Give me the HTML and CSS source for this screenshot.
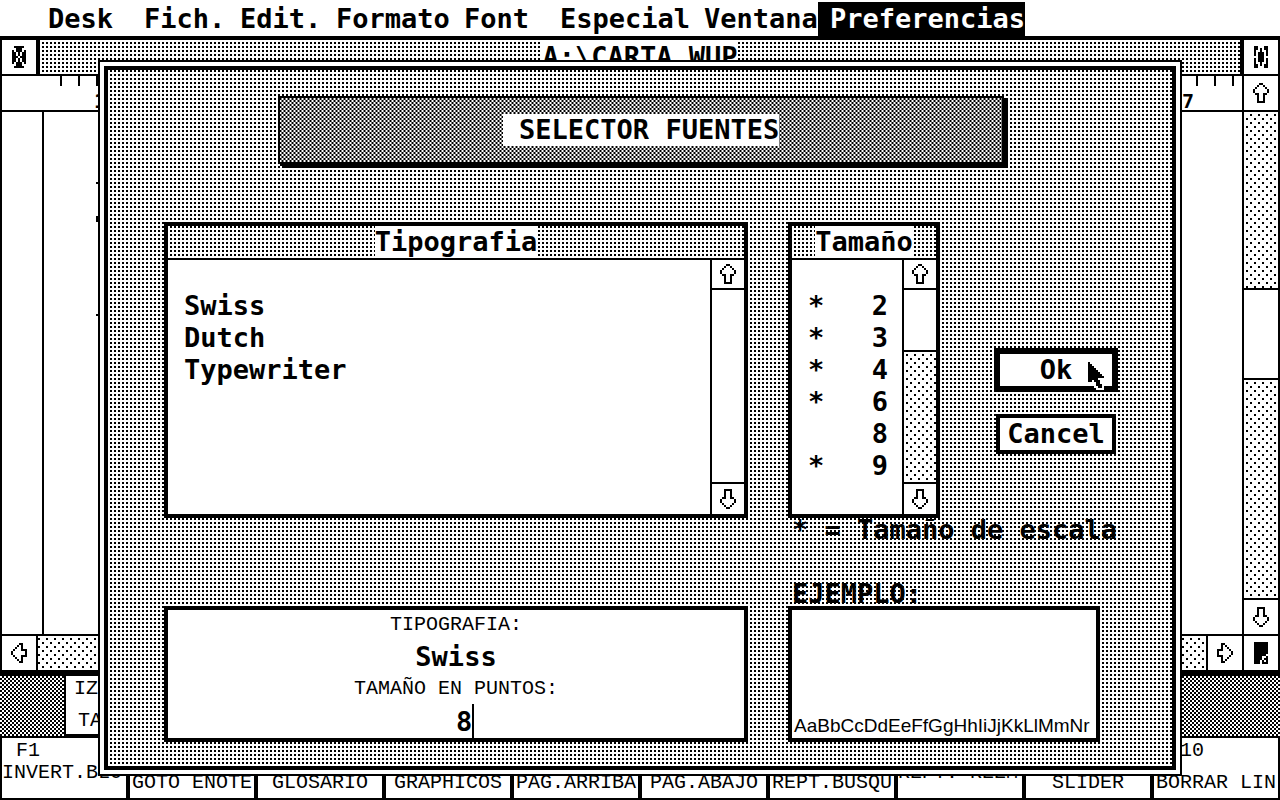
FILE: index.html
```html
<!DOCTYPE html>
<html lang="es">
<head>
<meta charset="utf-8">
<meta name="viewport" content="width=device-width, initial-scale=1">
<title>Selector fuentes</title>
<link rel="stylesheet" href="styles.css">
</head>
<body>
<svg class="sprite" aria-hidden="true">
  <symbol id="arrow-up" viewBox="0 0 8 10"><path d="M3 .5h2M2 1.5h1m2 0h1M1 2.5h1m4 0h1M0 3.5h1m6 0h1M0 4.5h1m6 0h1M1 5.5h2m2 0h2M2 6.5h1m2 0h1M2 7.5h1m2 0h1M2 8.5h1m2 0h1M2 9.5h4"/></symbol>
  <symbol id="arrow-down" viewBox="0 0 8 10"><path d="M2 .5h4M2 1.5h1m2 0h1M2 2.5h1m2 0h1M2 3.5h1m2 0h1M1 4.5h2m2 0h2M0 5.5h1m6 0h1M0 6.5h1m6 0h1M1 7.5h1m4 0h1M2 8.5h1m2 0h1M3 9.5h2"/></symbol>
  <symbol id="arrow-left" viewBox="0 0 8 10"><path d="M4 .5h2M3 1.5h1m1 0h1M2 2.5h1m2 0h1M1 3.5h1m3 0h3M0 4.5h1m6 0h1M0 5.5h1m6 0h1M1 6.5h1m3 0h3M2 7.5h1m2 0h1M3 8.5h1m1 0h1M4 9.5h2"/></symbol>
  <symbol id="arrow-right" viewBox="0 0 8 10"><path d="M2 .5h2M2 1.5h1m1 0h1M2 2.5h1m2 0h1M0 3.5h3m3 0h1M0 4.5h1m6 0h1M0 5.5h1m6 0h1M0 6.5h3m3 0h1M2 7.5h1m2 0h1M2 8.5h1m1 0h1M2 9.5h2"/></symbol>
  <symbol id="close" viewBox="0 0 7 11"><path d="M1 .5h5M2 1.5h3M0 2.5h1m1 0h3m1 0h1M0 3.5h2m1 0h1m1 0h2M0 4.5h2m1 0h1m1 0h2M0 5.5h3m1 0h3M0 6.5h2m1 0h1m1 0h2M0 7.5h2m1 0h1m1 0h2M0 8.5h1m1 0h3m1 0h1M2 9.5h3M1 10.5h5"/></symbol>
  <symbol id="full" viewBox="0 0 7 11"><path d="M0 .5h2m3 0h2M0 1.5h2m1 0h1m1 0h2M0 2.5h1m2 0h1m2 0h1M0 3.5h1m1 0h3m1 0h1M0 4.5h1m1 0h3m1 0h1M2 5.5h3M0 6.5h1m1 0h3m1 0h1M0 7.5h1m1 0h3m1 0h1M0 8.5h1m2 0h1m2 0h1M0 9.5h2m1 0h1m1 0h2M0 10.5h2m3 0h2"/></symbol>
  <symbol id="size" viewBox="0 0 7 11"><path d="M0 3h7" stroke-width="6"/><path d="M0 6.5h6M0 7.5h4m2 0h1M0 8.5h4m1 0h2M0 9.5h3m1 0h1m1 0h1M0 10.5h3m1 0h3"/></symbol>
</svg>

<nav class="menubar" aria-label="Menu">
  <button type="button" class="menu-4">Desk</button>
  <button type="button" class="menu-4">Fich.</button>
  <button type="button" class="menu-4">Edit.</button>
  <button type="button" class="menu-6">Formato</button>
  <button type="button" class="menu-4">Font</button>
  <button type="button" class="menu-7">Especial</button>
  <button type="button" class="menu-5">Ventana</button>
  <button type="button" class="open">Preferencias</button>
</nav>

<main class="window">
  <header class="titlebar">
    <button type="button" class="cell" aria-label="Cerrar"><svg class="gadget"><use href="#close"/></svg></button>
    <div class="title-fill"><span>A:\CARTA.WUP</span></div>
    <button type="button" class="cell" aria-label="Ampliar"><svg class="gadget"><use href="#full"/></svg></button>
  </header>
  <div class="work">
    <div class="sheet">
      <div class="ruler">
        <div class="ticks"><i></i><i></i><i></i></div>
        <span class="mark first">1</span>
        <span class="mark last">7</span>
        <div class="ticks"><i></i><i></i><i></i></div>
      </div>
      <div class="page"><div class="margin"></div><div class="dots"><i></i><i></i><i></i></div></div>
      <div class="hscroll">
        <button type="button" class="cell" aria-label="Izquierda"><svg class="arrow"><use href="#arrow-left"/></svg></button>
        <div class="track"></div>
        <button type="button" class="cell" aria-label="Derecha"><svg class="arrow"><use href="#arrow-right"/></svg></button>
      </div>
    </div>
    <div class="vscroll">
      <button type="button" class="cell" aria-label="Arriba"><svg class="arrow"><use href="#arrow-up"/></svg></button>
      <div class="track before"></div>
      <div class="thumb"></div>
      <div class="track after"></div>
      <button type="button" class="cell" aria-label="Abajo"><svg class="arrow"><use href="#arrow-down"/></svg></button>
      <button type="button" class="cell" aria-label="Redimensionar"><svg class="gadget"><use href="#size"/></svg></button>
    </div>
  </div>
</main>

<div class="desk">
  <div class="tabs"><span>IZQ</span><span class="second">TAB</span></div>
</div>

<div class="keys">
  <button type="button" class="raised"><b>F1</b><span>INVERT.BLO</span></button>
  <button type="button"><b>F2</b><span>GOTO ENOTE</span></button>
  <button type="button"><b>F3</b><span>GLOSARIO</span></button>
  <button type="button"><b>F4</b><span>GRAPHICOS</span></button>
  <button type="button"><b>F5</b><span>PAG.ARRIBA</span></button>
  <button type="button"><b>F6</b><span>PAG.ABAJO</span></button>
  <button type="button"><b>F7</b><span>REPT.BUSQU</span></button>
  <button type="button" class="raised"><b>F8</b><span>REPT. REEM</span></button>
  <button type="button"><b>F9</b><span>SLIDER</span></button>
  <button type="button"><b>F10</b><span>BORRAR LIN</span></button>
</div>

<div class="frame" role="dialog" aria-labelledby="dialog-title">
  <form class="dialog">
    <h1 class="banner"><span id="dialog-title"> SELECTOR FUENTES</span></h1>

    <section class="listbox">
      <h2><span>Tipografia</span></h2>
      <div class="list-row">
        <ul class="fonts"><li>Swiss</li><li>Dutch</li><li>Typewriter</li></ul>
        <div class="bar">
          <button type="button" aria-label="Subir tipografia"><svg class="arrow"><use href="#arrow-up"/></svg></button>
          <div class="plain"></div>
          <button type="button" aria-label="Bajar tipografia"><svg class="arrow"><use href="#arrow-down"/></svg></button>
        </div>
      </div>
    </section>

    <div class="side">
      <section class="listbox narrow">
        <h2><span>Tamaño</span></h2>
        <div class="list-row">
          <ul class="sizes">
            <li><span>*</span><span>2</span></li>
            <li><span>*</span><span>3</span></li>
            <li><span>*</span><span>4</span></li>
            <li><span>*</span><span>6</span></li>
            <li><span></span><span>8</span></li>
            <li><span>*</span><span>9</span></li>
          </ul>
          <div class="bar">
            <button type="button" aria-label="Subir tamaño"><svg class="arrow"><use href="#arrow-up"/></svg></button>
            <div class="knob"></div>
            <div class="track plain"></div>
            <button type="button" aria-label="Bajar tamaño"><svg class="arrow"><use href="#arrow-down"/></svg></button>
          </div>
        </div>
      </section>
      <div class="actions">
        <div class="default">
          <button type="submit" class="ok">Ok</button>
          <svg class="pointer" viewBox="-1 -1 10 17" aria-hidden="true">
            <path class="halo" d="M0 0h1v1h1v1h1v1h1v1h1v1h1v1h1v1h1v1H5v1h1v2h1v2H5v-1H4v-2H3v-1H2v1H0z"/>
            <path class="ink" d="M0 0h1v1h1v1h1v1h1v1h1v1h1v1h1v1h1v1H5v1h1v2h1v2H5v-1H4v-2H3v-1H2v1H0z"/>
          </svg>
        </div>
        <button type="button" class="cancel">Cancel</button>
      </div>
    </div>

    <div class="captions">
      <p>* = Tamaño de escala</p>
      <p>EJEMPLO:</p>
    </div>

    <section class="panel current">
      <p class="small">TIPOGRAFIA:</p>
      <p class="large">Swiss</p>
      <label class="small" for="points">TAMAÑO EN PUNTOS:</label>
      <div class="entry"><input id="points" type="text" value="8" maxlength="3"><i class="caret"></i></div>
    </section>

    <section class="panel sample"><p>AaBbCcDdEeFfGgHhIiJjKkLlMmNr</p></section>
  </form>
</div>
</body>
</html>
```
FILE: styles.css
```css
:root {
  --dots: conic-gradient(from 90deg at 2px 2px, #000 25%, #fff 0) 0 0 / 4px 4px fixed;
  --checks: conic-gradient(#000 25%, #fff 0 50%, #000 0 75%, #fff 0) 0 0 / 4px 4px fixed;
  --sparse: conic-gradient(from 90deg at 6px 6px, #000 25%, transparent 0) 0 0 / 8px 8px fixed,
    conic-gradient(from 90deg at 6px 6px, #000 25%, transparent 0) 4px 4px / 8px 8px fixed, #fff;
}

* { box-sizing: border-box; }

body {
  position: relative;
  display: flex;
  flex-direction: column;
  min-height: 100vh;
  margin: 0;
  background: #fff;
  color: #000;
  font: bold 27px/32px "DejaVu Sans Mono", monospace;
}

h1, h2, p, ul { margin: 0; padding: 0; font: inherit; list-style: none; }

button, input {
  margin: 0;
  padding: 0;
  border: 0;
  border-radius: 0;
  background: #fff;
  color: inherit;
  font: inherit;
}

.sprite { position: absolute; width: 0; height: 0; }
svg { display: block; shape-rendering: crispEdges; stroke: #000; fill: none; }
.arrow { width: 16px; height: 20px; }
.gadget { width: 14px; height: 22px; }

/* menu bar */
.menubar { display: flex; height: 36px; padding: 2px 0 0 48px; }
.menubar button { text-align: left; white-space: nowrap; }
.menu-4 { width: 96px; }
.menu-5 { width: 114px; }
.menu-6 { width: 128px; }
.menu-7 { width: 144px; }
.menubar .open { padding-left: 12px; background: #000; color: #fff; }

/* document window */
.window {
  display: flex;
  flex: 1;
  flex-direction: column;
  border: solid #000;
  border-width: 4px 2px 6px;
}
.cell { display: flex; flex: none; align-items: center; justify-content: center; width: 34px; height: 34px; }
.titlebar { display: flex; border-bottom: 2px solid #000; }
.title-fill {
  display: flex;
  flex: 1;
  justify-content: center;
  border: solid #000;
  border-width: 0 4px;
  background: var(--dots);
}
.title-fill span { background: #fff; line-height: 34px; }
.work { display: flex; flex: 1; }
.sheet { display: flex; flex: 1; flex-direction: column; }
.ruler { display: flex; height: 36px; padding: 0 8px 0 58px; border-bottom: 2px solid #000; }
.ticks { display: flex; justify-content: space-between; width: 38px; }
.ticks i { width: 2px; height: 10px; background: #000; }
.mark { font-size: 20px; line-height: 50px; }
.first { margin-left: -4px; }
.last { margin: 0 2px 0 auto; }
.page { display: flex; flex: 1; }
.margin { width: 42px; border-right: 2px solid #000; }
.dots { display: flex; flex-direction: column; width: 54px; padding-top: 70px; gap: 32px; align-items: flex-end; }
.dots i { width: 2px; height: 2px; background: #000; }
.dots i:nth-child(2) { height: 6px; }
.dots i:nth-child(3) { margin-top: 60px; }
.hscroll { display: flex; border-top: 2px solid #000; }
.track { background: var(--sparse); }
.hscroll .track { flex: 1; border: solid #000; border-width: 0 2px; }
.vscroll { display: flex; flex-direction: column; width: 36px; border-left: 2px solid #000; }
.vscroll .before { flex: 176; border-top: 2px solid #000; }
.vscroll .after { flex: 218; border-bottom: 2px solid #000; }
.thumb { height: 92px; border: solid #000; border-width: 2px 0; background: #fff; }
.vscroll .cell:last-child { height: 36px; border-top: 2px solid #000; }

/* strip under the window */
.desk { height: 60px; padding-left: 64px; background: var(--checks); }
.tabs {
  display: flex;
  flex-direction: column;
  justify-content: space-between;
  width: 160px;
  height: 60px;
  padding: 1px 8px;
  border: solid #000;
  border-width: 0 2px 2px;
  background: #fff;
  font: 20px/24px "Liberation Mono", monospace;
}
.tabs .second { padding-left: 4px; }

/* function keys */
.keys {
  display: grid;
  grid-template-columns: repeat(10, minmax(0, 1fr));
  gap: 4px;
  height: 64px;
  border: 2px solid #000;
  background: #000;
}
.keys button {
  display: flex;
  flex-direction: column;
  align-items: flex-start;
  justify-content: flex-start;
  gap: 12px;
  padding-top: 3px;
  overflow: hidden;
  font: 20px/20px "Liberation Mono", monospace;
  white-space: nowrap;
}
.keys b { padding-left: 14px; font-weight: normal; }
.keys span { align-self: center; }
.keys .raised { gap: 2px; }
.keys .raised span { align-self: flex-start; }

/* dialog */
.frame {
  position: absolute;
  inset: 60px 98px 24px;
  padding: 4px;
  border: 2px solid #000;
  background: #fff;
}
.dialog {
  display: grid;
  grid-template-columns: minmax(0, 1fr) 330px;
  grid-template-rows: 126px 1fr 88px 136px;
  column-gap: 40px;
  height: 100%;
  padding: 26px 54px 24px 56px;
  border: 4px solid #000;
  background: var(--dots);
}
.banner {
  display: flex;
  grid-column: 1 / -1;
  align-items: center;
  justify-content: center;
  justify-self: center;
  width: 76%;
  height: 68px;
  border: 2px solid #000;
  background: var(--checks);
  box-shadow: 2px 2px #000, 4px 4px #000;
}
.banner span { background: #fff; white-space: pre; }

.listbox { display: flex; flex-direction: column; border: 4px solid #000; background: #fff; }
.listbox h2 {
  display: flex;
  justify-content: center;
  border-bottom: 2px solid #000;
  background: var(--dots);
}
.listbox h2 span { background: #fff; }
.list-row { display: flex; flex: 1; }
.list-row ul { flex: 1; padding: 30px 16px 0; }
.sizes li { display: flex; justify-content: space-between; }
.bar { display: flex; flex-direction: column; width: 34px; border-left: 2px solid #000; }
.bar button { display: flex; align-items: center; justify-content: center; height: 30px; }
.bar button:first-child { height: 28px; }
.plain { flex: 1; border: solid #000; border-width: 2px 0; }
.knob { height: 62px; border-top: 2px solid #000; background: #fff; }

.side { display: flex; justify-content: space-between; }
.narrow { width: 152px; }
.sizes li { margin-right: -2px; }
.actions { display: flex; flex-direction: column; align-items: center; gap: 22px; width: 124px; padding-top: 126px; }
.default { position: relative; width: 100%; }
.ok { width: 100%; height: 44px; border: 6px solid #000; }
.cancel { width: 120px; height: 40px; border: 4px solid #000; }
.pointer { position: absolute; top: 12px; left: 92px; width: 20px; height: 34px; stroke: none; }
.halo { fill: #fff; stroke: #fff; stroke-width: 2; }
.ink { fill: #000; }

.captions {
  display: flex;
  grid-column: 2;
  flex-direction: column;
  justify-content: space-between;
  padding-left: 4px;
  line-height: 24px;
  white-space: nowrap;
}
.panel { border: 4px solid #000; background: #fff; }
.current { display: flex; flex-direction: column; align-items: center; }
.small { font: 20px/30px "Liberation Mono", monospace; }
.large { line-height: 34px; }
.entry { display: flex; width: 50%; margin-left: auto; }
.entry input { width: 16px; height: 34px; outline: 0; }
.caret { width: 2px; height: 38px; background: #000; }
.sample { display: flex; align-items: flex-end; width: 312px; overflow: hidden; }
.sample p { padding-left: 2px; font: 19px/24px "Liberation Sans", Arial, sans-serif; }
```
